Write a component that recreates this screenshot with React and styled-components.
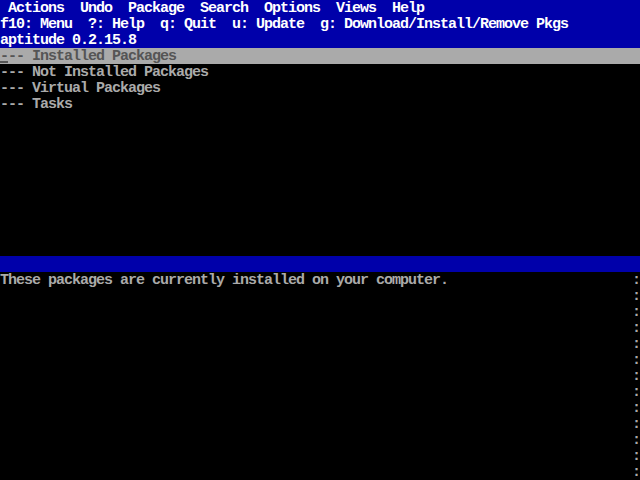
import React from 'react';
import styled, { createGlobalStyle } from 'styled-components';

const GlobalStyle = createGlobalStyle`
  html, body {
    margin: 0;
    padding: 0;
    background: #000;
  }
`;

const menus = ['Actions', 'Undo', 'Package', 'Search', 'Options', 'Views', 'Help'];

const keys = [
  ['f10', 'Menu'],
  ['?', 'Help'],
  ['q', 'Quit'],
  ['u', 'Update'],
  ['g', 'Download/Install/Remove Pkgs'],
];

const tree = [
  { label: 'Installed Packages', selected: true },
  { label: 'Not Installed Packages' },
  { label: 'Virtual Packages' },
  { label: 'Tasks' },
];

export default function App() {
  return (
    <>
      <GlobalStyle />
      <Screen>
        <Header>
          <Line>
            {' ' + menus.join('  ')}
          </Line>
          <Line>{keys.map(([k, v]) => `${k}: ${v}`).join('  ')}</Line>
          <Line>aptitude 0.2.15.8</Line>
        </Header>

        <Tree>
          {tree.map((item, i) => (
            <TreeRow key={i} $selected={item.selected}>
              {item.selected && <Cursor />}
              {'--- ' + item.label}
            </TreeRow>
          ))}
        </Tree>

        <Divider />

        <Details>
          <Line $dim>These packages are currently installed on your computer.</Line>
          <ScrollBar>
            {Array.from({ length: 13 }).map((_, i) => (
              <span key={i}>:</span>
            ))}
          </ScrollBar>
        </Details>
      </Screen>
    </>
  );
}

// 80x30 text console, 8x16 cells
const Screen = styled.div`
  width: 640px;
  height: 480px;
  display: flex;
  flex-direction: column;
  background: #000;
  color: #aaaaaa;
  font-family: 'Liberation Mono', 'DejaVu Sans Mono', monospace;
  font-size: 15px;
  letter-spacing: -1px;
  font-weight: bold;
  line-height: 18px;
  overflow: hidden;
`;

const Header = styled.div`
  background: #0000aa;
  color: #ffffff;
  display: flex;
  flex-direction: column;
`;

const Line = styled.div`
  height: 16px;
  white-space: pre;
  color: ${p => (p.$dim ? '#aaaaaa' : 'inherit')};
`;

const Tree = styled.div`
  height: 208px;
  display: flex;
  flex-direction: column;
`;

const TreeRow = styled.div`
  position: relative;
  height: 16px;
  white-space: pre;
  background: ${p => (p.$selected ? '#aaaaaa' : 'transparent')};
  color: ${p => (p.$selected ? '#555555' : '#aaaaaa')};
`;

const Cursor = styled.span`
  position: absolute;
  left: 0;
  bottom: 1px;
  width: 8px;
  height: 2px;
  background: #555555;
`;

const Divider = styled.div`
  height: 16px;
  background: #0000aa;
`;

const Details = styled.div`
  flex: 1;
  display: grid;
  grid-template-columns: 1fr 8px;
`;

const ScrollBar = styled.div`
  display: flex;
  flex-direction: column;
  color: #aaaaaa;
  & > span {
    height: 16px;
    display: block;
    text-align: center;
  }
`;
